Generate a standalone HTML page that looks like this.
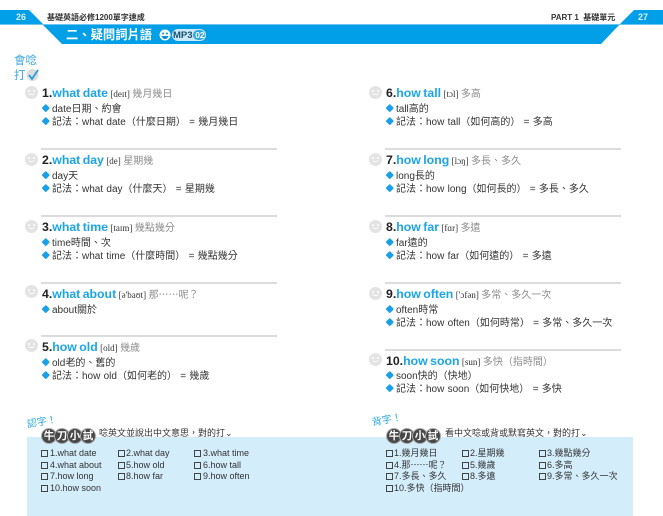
<!DOCTYPE html>
<html><head><meta charset="utf-8"><style>
html,body{margin:0;padding:0;background:#fff}
#p{position:relative;width:663px;height:516px;overflow:hidden;background:#fff;font-family:"Liberation Sans","Noto Sans CJK TC",sans-serif;color:#2a2a2a;filter:blur(.35px)}
.a{position:absolute;white-space:nowrap;line-height:14px}
.h{font-size:12.3px;font-weight:bold;color:#222;line-height:16px;margin-top:1px;word-spacing:-1px}
.h b{color:#1ba5e8}
.h i{font:normal 9px "Liberation Serif",serif;color:#333}
.h u{text-decoration:none;font-size:10px;font-weight:normal;color:#8c8c8c}
.b{font-size:10px;color:#333;margin-top:2px;word-spacing:.5px}
.d{position:absolute;width:5.5px;height:5.5px;background:#1ba0e5;transform:rotate(45deg);border-radius:1px}
.r{position:absolute;width:236px;height:2px;background:#dcdcdc}
.f{position:absolute;width:13px;height:13px;border-radius:50%;background:#e3e3e3}
.f:before{content:"";position:absolute;left:3px;top:4px;width:2px;height:2px;background:#fff;border-radius:50%;box-shadow:5px 0 #fff}
.f:after{content:"";position:absolute;left:3px;top:6px;width:7px;height:3px;border-bottom:1px solid #fff;border-radius:0 0 5px 5px;box-sizing:border-box}
.q{font-size:9px;color:#333;line-height:11px}
.c{position:absolute;width:5px;height:5px;border:1px solid #444}
.tag{position:absolute;top:428px;height:15px;width:54px}
.tag span{position:absolute;top:0;width:14px;height:14px;border-radius:50%;background:#484848;color:#fff;font-size:10.500px;font-weight:bold;line-height:14px;text-align:center;border:.5px solid #aaa}
</style></head><body><div id="p">
<svg class="a" style="left:0;top:0" width="663" height="50"><path d="M0 10H29L43 24H620L634 10H663V24H620L601 44H62L43 25H0Z" fill="#009fe8"/><rect x="0" y="24" width="663" height="1" fill="#6cc5f0"/></svg>
<div class="a" style="left:16px;top:10px;color:#d8effa;font-size:9px;font-weight:bold">26</div>
<div class="a" style="left:638px;top:10px;color:#d8effa;font-size:9px;font-weight:bold">27</div>
<div class="a" style="left:47px;top:11px;font-size:8px;font-weight:bold;color:#333">基礎英語必修1200單字速成</div>
<div class="a" style="left:551px;top:11px;font-size:8px;font-weight:bold;color:#333">PART 1&nbsp; 基礎單元</div>
<div class="a" style="left:66px;top:28px;font-size:12.300px;font-weight:bold;color:#fff;line-height:15px">二、疑問詞片語</div>
<svg class="a" style="left:158px;top:28px" width="50" height="14"><circle cx="7" cy="7" r="5.500" fill="#fff"/><circle cx="5" cy="5.500" r="1" fill="#0a8fd0"/><circle cx="9" cy="5.500" r="1" fill="#0a8fd0"/><path d="M3.500 8h7q-1 3-3.500 3t-3.500-3z" fill="#0a8fd0"/><rect x="14" y="1" width="34" height="12" rx="6" fill="#cde9f7"/><rect x="35" y="2" width="12" height="10" rx="5" fill="#2fa7df"/></svg>
<div class="a" style="left:173px;top:28px;font-size:9.500px;font-weight:bold;color:#164f73">MP3 <span style="color:#fff;font-size:8.500px">02</span></div>
<div class="a" style="left:14px;top:54px;font-size:11.500px;color:#3fa9dc;line-height:15px">會唸<br>打</div>
<svg class="a" style="left:26px;top:68px" width="14" height="14"><circle cx="6.500" cy="7" r="6" fill="#ddd"/><path d="M3 7l3 4 6-9" fill="none" stroke="#1898dd" stroke-width="1.600"/></svg>

<div class="f" style="left:25px;top:86px"></div><div class="a h" style="left:42px;top:84px">1.<b>what date</b> <i>[deɪt]</i> <u>幾月幾日</u></div>
<div class="d" style="left:43px;top:105px"></div><div class="a b" style="left:52px;top:101px">date日期、約會</div>
<div class="d" style="left:43px;top:118px"></div><div class="a b" style="left:52px;top:114px">記法：what date（什麼日期）&nbsp;= 幾月幾日</div>

<div class="r" style="left:41px;top:148px"></div>
<div class="f" style="left:25px;top:153px"></div><div class="a h" style="left:42px;top:151px">2.<b>what day</b> <i>[de]</i> <u>星期幾</u></div>
<div class="d" style="left:43px;top:172px"></div><div class="a b" style="left:52px;top:168px">day天</div>
<div class="d" style="left:43px;top:185px"></div><div class="a b" style="left:52px;top:181px">記法：what day（什麼天）&nbsp;= 星期幾</div>

<div class="r" style="left:41px;top:215px"></div>
<div class="f" style="left:25px;top:220px"></div><div class="a h" style="left:42px;top:218px">3.<b>what time</b> <i>[taɪm]</i> <u>幾點幾分</u></div>
<div class="d" style="left:43px;top:239px"></div><div class="a b" style="left:52px;top:235px">time時間、次</div>
<div class="d" style="left:43px;top:252px"></div><div class="a b" style="left:52px;top:248px">記法：what time（什麼時間）&nbsp;= 幾點幾分</div>

<div class="r" style="left:41px;top:282px"></div>
<div class="f" style="left:25px;top:285px"></div><div class="a h" style="left:42px;top:285px">4.<b>what about</b> <i>[ə'baʊt]</i> <u>那⋯⋯呢？</u></div>
<div class="d" style="left:43px;top:306px"></div><div class="a b" style="left:52px;top:302px">about關於</div>

<div class="r" style="left:41px;top:335px"></div>
<div class="f" style="left:25px;top:339px"></div><div class="a h" style="left:42px;top:338px">5.<b>how old</b> <i>[old]</i> <u>幾歲</u></div>
<div class="d" style="left:43px;top:359px"></div><div class="a b" style="left:52px;top:355px">old老的、舊的</div>
<div class="d" style="left:43px;top:372px"></div><div class="a b" style="left:52px;top:368px">記法：how old（如何老的）&nbsp;= 幾歲</div>

<div class="f" style="left:369px;top:86px"></div><div class="a h" style="left:386px;top:84px">6.<b>how tall</b> <i>[tɔl]</i> <u>多高</u></div>
<div class="d" style="left:387px;top:105px"></div><div class="a b" style="left:396px;top:101px">tall高的</div>
<div class="d" style="left:387px;top:118px"></div><div class="a b" style="left:396px;top:114px">記法：how tall（如何高的）&nbsp;= 多高</div>

<div class="r" style="left:385px;top:148px"></div>
<div class="f" style="left:369px;top:153px"></div><div class="a h" style="left:386px;top:151px">7.<b>how long</b> <i>[lɔŋ]</i> <u>多長、多久</u></div>
<div class="d" style="left:387px;top:172px"></div><div class="a b" style="left:396px;top:168px">long長的</div>
<div class="d" style="left:387px;top:185px"></div><div class="a b" style="left:396px;top:181px">記法：how long（如何長的）&nbsp;= 多長、多久</div>

<div class="r" style="left:385px;top:215px"></div>
<div class="f" style="left:369px;top:220px"></div><div class="a h" style="left:386px;top:218px">8.<b>how far</b> <i>[fɑr]</i> <u>多遠</u></div>
<div class="d" style="left:387px;top:239px"></div><div class="a b" style="left:396px;top:235px">far遠的</div>
<div class="d" style="left:387px;top:252px"></div><div class="a b" style="left:396px;top:248px">記法：how far（如何遠的）&nbsp;= 多遠</div>

<div class="r" style="left:385px;top:282px"></div>
<div class="f" style="left:369px;top:287px"></div><div class="a h" style="left:386px;top:285px">9.<b>how often</b> <i>['ɔfən]</i> <u>多常、多久一次</u></div>
<div class="d" style="left:387px;top:306px"></div><div class="a b" style="left:396px;top:302px">often時常</div>
<div class="d" style="left:387px;top:319px"></div><div class="a b" style="left:396px;top:315px">記法：how often（如何時常）&nbsp;= 多常、多久一次</div>

<div class="r" style="left:385px;top:349px"></div>
<div class="f" style="left:369px;top:353px"></div><div class="a h" style="left:386px;top:352px">10.<b>how soon</b> <i>[sun]</i> <u>多快（指時間）</u></div>
<div class="d" style="left:387px;top:372px"></div><div class="a b" style="left:396px;top:368px">soon快的（快地）</div>
<div class="d" style="left:387px;top:385px"></div><div class="a b" style="left:396px;top:381px">記法：how soon（如何快地）&nbsp;= 多快</div>

<div class="a" style="left:27px;top:437px;width:606px;height:79px;background:#d4edfb"></div>
<div class="a" style="left:27px;top:416px;font-size:10px;color:#2ea7e0;transform:rotate(-10deg)">認字！</div>
<div class="tag" style="left:41px"><span style="left:0">牛</span><span style="left:13px">刀</span><span style="left:26px">小</span><span style="left:39px">試</span></div>
<div class="a" style="left:99px;top:425px;font-size:9px;color:#333;margin-top:1px">唸英文並說出中文意思，對的打⌄</div>
<div class="a" style="left:372px;top:414px;font-size:10px;color:#2ea7e0;transform:rotate(-10deg)">背字！</div>
<div class="tag" style="left:386px"><span style="left:0">牛</span><span style="left:13px">刀</span><span style="left:26px">小</span><span style="left:39px">試</span></div>
<div class="a" style="left:445px;top:425px;font-size:9px;color:#333;margin-top:1px">看中文唸或背或默寫英文，對的打⌄</div>

<div class="c" style="left:41px;top:450px"></div><div class="a q" style="left:50px;top:448px">1.what date</div>
<div class="c" style="left:118px;top:450px"></div><div class="a q" style="left:126px;top:448px">2.what day</div>
<div class="c" style="left:194px;top:450px"></div><div class="a q" style="left:203px;top:448px">3.what time</div>
<div class="c" style="left:41px;top:462px"></div><div class="a q" style="left:50px;top:460px">4.what about</div>
<div class="c" style="left:118px;top:462px"></div><div class="a q" style="left:126px;top:460px">5.how old</div>
<div class="c" style="left:194px;top:462px"></div><div class="a q" style="left:203px;top:460px">6.how tall</div>
<div class="c" style="left:41px;top:473px"></div><div class="a q" style="left:50px;top:471px">7.how long</div>
<div class="c" style="left:118px;top:473px"></div><div class="a q" style="left:126px;top:471px">8.how far</div>
<div class="c" style="left:194px;top:473px"></div><div class="a q" style="left:203px;top:471px">9.how often</div>
<div class="c" style="left:41px;top:485px"></div><div class="a q" style="left:50px;top:483px">10.how soon</div>

<div class="c" style="left:386px;top:450px"></div><div class="a q" style="left:394px;top:448px">1.幾月幾日</div>
<div class="c" style="left:462px;top:450px"></div><div class="a q" style="left:470px;top:448px">2.星期幾</div>
<div class="c" style="left:539px;top:450px"></div><div class="a q" style="left:547px;top:448px">3.幾點幾分</div>
<div class="c" style="left:386px;top:462px"></div><div class="a q" style="left:394px;top:460px">4.那⋯⋯呢？</div>
<div class="c" style="left:462px;top:462px"></div><div class="a q" style="left:470px;top:460px">5.幾歲</div>
<div class="c" style="left:539px;top:462px"></div><div class="a q" style="left:547px;top:460px">6.多高</div>
<div class="c" style="left:386px;top:473px"></div><div class="a q" style="left:394px;top:471px">7.多長、多久</div>
<div class="c" style="left:462px;top:473px"></div><div class="a q" style="left:470px;top:471px">8.多遠</div>
<div class="c" style="left:539px;top:473px"></div><div class="a q" style="left:547px;top:471px">9.多常、多久一次</div>
<div class="c" style="left:386px;top:485px"></div><div class="a q" style="left:394px;top:483px">10.多快（指時間）</div>
</div></body></html>
